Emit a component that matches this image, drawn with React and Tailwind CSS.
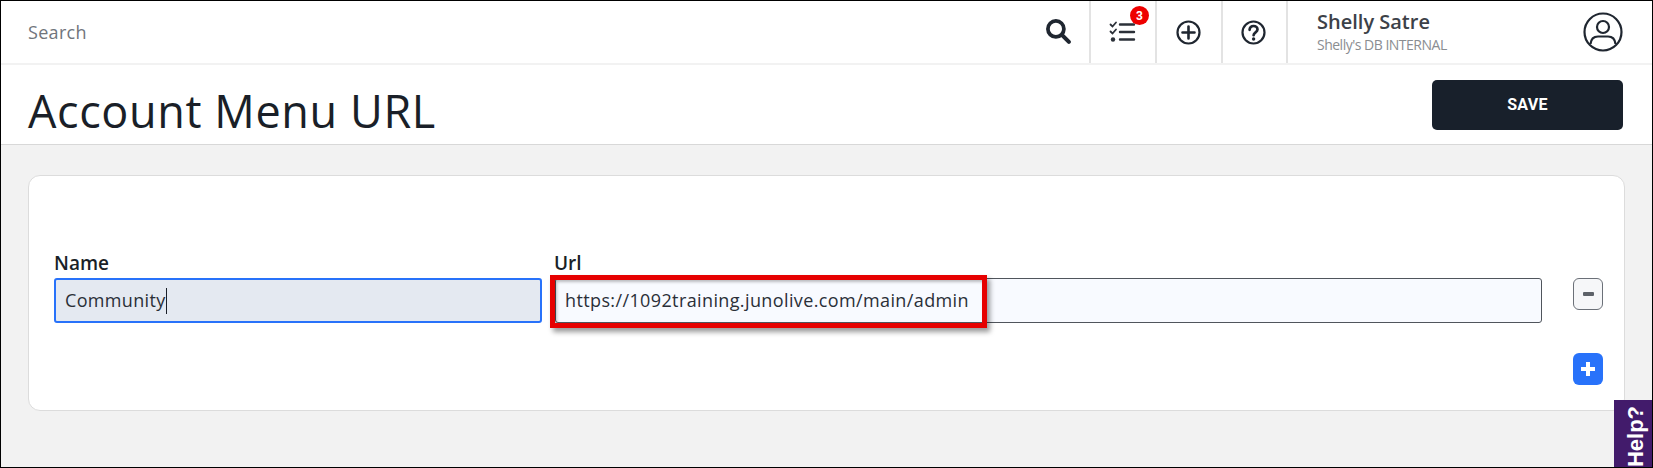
import React from "react";

function ListIcon() {
  return (
    <svg width="28" height="24" viewBox="0 0 28 24" fill="none" stroke="#2b3038" strokeLinecap="round">
      <path d="M1.5 4.5 L3.5 6.5 L7 2.5" strokeWidth="1.8" />
      <path d="M1.5 11.5 L3.5 13.5 L7 9.5" strokeWidth="1.8" />
      <circle cx="4" cy="19.5" r="2.2" fill="#2b3038" stroke="none" />
      <path d="M11 4.5 H25 M11 12 H25 M11 19.5 H25" strokeWidth="2.4" />
    </svg>
  );
}

function PlusCircle() {
  return (
    <svg width="25" height="25" viewBox="0 0 25 25" fill="none" stroke="#1f2630" strokeLinecap="round">
      <circle cx="12.5" cy="12.5" r="11" strokeWidth="2.2" />
      <path d="M12.5 6.5 V18.5 M6.5 12.5 H18.5" strokeWidth="2.6" />
    </svg>
  );
}

function QuestionCircle() {
  return (
    <svg width="25" height="25" viewBox="0 0 25 25" fill="none" stroke="#1f2630" strokeLinecap="round">
      <circle cx="12.5" cy="12.5" r="11" strokeWidth="2.2" />
      <path d="M8.6 9.8 C8.6 7.4 10.4 6 12.5 6 C14.8 6 16.5 7.5 16.5 9.6 C16.5 12.3 12.6 12.4 12.6 15.2" strokeWidth="2.7" />
      <circle cx="12.6" cy="19" r="1.7" fill="#1f2630" stroke="none" />
    </svg>
  );
}

function SearchIcon() {
  return (
    <svg width="27" height="27" viewBox="0 0 26 26" fill="none" stroke="#1f2630" strokeLinecap="round">
      <circle cx="10.5" cy="10.5" r="7.7" strokeWidth="3.6" />
      <path d="M16.5 16.5 L23 23" strokeWidth="4" />
    </svg>
  );
}

function Avatar() {
  return (
    <svg width="40" height="40" viewBox="0 0 40 40" fill="none" stroke="#1f2630" strokeWidth="2.2">
      <circle cx="20" cy="20" r="18.5" />
      <circle cx="20" cy="15" r="6" />
      <path d="M7.5 32 C8 27 11 24.5 15 24.5 H25 C29 24.5 32 27 32.5 32" />
    </svg>
  );
}

export default function App() {
  return (
    <div className="relative flex h-[468px] w-full flex-col overflow-hidden border border-black bg-[#f2f2f2] font-['Open_Sans',sans-serif]">
      <header className="flex h-[64px] shrink-0 items-stretch border-b-2 border-[#f2f2f2] bg-white">
        <div className="flex flex-1 items-center pl-[27px] text-[18px] tracking-[0.3px] text-[#70757c]">Search</div>
        <div className="flex w-[64px] items-center justify-center pl-[2px] pb-[1px]">
          <SearchIcon />
        </div>
        <div className="relative flex w-[66px] items-center justify-center border-l-2 border-[#e3e3e3]">
          <ListIcon />
          <span className="absolute right-[6px] top-[5px] flex h-[19px] w-[19px] items-center justify-center rounded-full bg-[#ee0000] font-['Roboto',sans-serif] text-[12px] font-bold text-white">3</span>
        </div>
        <div className="flex w-[66px] items-center justify-center border-l-2 border-[#e3e3e3] pr-[2px]">
          <PlusCircle />
        </div>
        <div className="flex w-[65px] items-center justify-center border-l-2 border-[#e3e3e3] pr-[2px]">
          <QuestionCircle />
        </div>
        <div className="flex w-[366px] items-center justify-between border-l-2 border-[#e3e3e3] pl-[29px] pr-[29px]">
          <div className="flex flex-col">
            <span className="text-[20px] font-semibold leading-[26px] text-[#3c4148]">Shelly Satre</span>
            <span className="text-[14px] leading-[20px] tracking-[-0.5px] text-[#8a8d91]">Shelly's DB INTERNAL</span>
          </div>
          <Avatar />
        </div>
      </header>

      <div className="flex h-[80px] shrink-0 items-start justify-between border-b border-[#d8d8d8] bg-white pl-[27px] pr-[29px]">
        <h1 className="mt-[16px] text-[45px] font-normal leading-[60px] tracking-[0.6px] text-[#1a1f28]">Account Menu URL</h1>
        <button className="mt-[15px] flex h-[50px] w-[191px] items-center justify-center rounded-[5px] bg-[#18202b] font-['Roboto',sans-serif] text-[16px] font-bold tracking-[0.3px] text-white">SAVE</button>
      </div>

      <main className="flex-1 px-[27px] pt-[30px]">
        <section className="h-[236px] rounded-[12px] border border-[#dcdcdc] bg-white pl-[25px] pr-[18px] pt-[73px]">
          <div className="flex items-start">
            <div className="flex w-[488px] flex-col">
              <label className="mb-[1px] text-[19px] font-semibold leading-[28px] text-[#1a1f28]">Name</label>
              <div className="flex h-[45px] items-center rounded-[3px] border-2 border-[#2872fa] bg-[#e4e9f1] pl-[9px] text-[18px] tracking-[0.33px] text-[#2a2f38]">
                Community<span className="h-[26px] w-[1px] bg-[#1a1f28]" />
              </div>
            </div>
            <div className="ml-[13px] flex w-[987px] flex-col">
              <label className="mb-[1px] -ml-[1px] text-[19px] font-semibold leading-[28px] text-[#1a1f28]">Url</label>
              <div className="flex h-[45px] items-center rounded-[3px] border border-[#50555c] bg-[#f8faff] pl-[9px] text-[18px] tracking-[0.38px] text-[#2a2f38]">
                https://1092training.junolive.com/main/admin
              </div>
            </div>
            <div className="ml-[31px] flex flex-col pt-[29px]">
              <button className="flex h-[32px] w-[30px] items-center justify-center rounded-[6px] border border-[#6b7078] bg-[#f6f7f9]">
                <span className="h-[4px] w-[11px] rounded-[1px] bg-[#5d6269]" />
              </button>
              <button className="mt-[43px] flex h-[32px] w-[30px] items-center justify-center rounded-[6px] bg-[#2872fa]">
                <svg width="14" height="14" viewBox="0 0 14 14" stroke="#fff" strokeWidth="4">
                  <path d="M7 0 V14 M0 7 H14" />
                </svg>
              </button>
            </div>
          </div>
        </section>
      </main>

      <div className="absolute left-[549px] top-[274px] h-[53px] w-[437px] border-[5px] border-[#e60000] shadow-[3px_4px_5px_rgba(0,0,0,0.4),inset_2px_2px_3px_rgba(0,0,0,0.25)]" />

      <div className="absolute bottom-0 right-0 flex h-[67px] w-[38px] items-center justify-center bg-[#421b6b] pl-[5px] pt-[6px]">
        <span className="-rotate-90 whitespace-nowrap font-['Liberation_Sans',sans-serif] text-[22px] font-bold text-white">Help?</span>
      </div>
    </div>
  );
}
